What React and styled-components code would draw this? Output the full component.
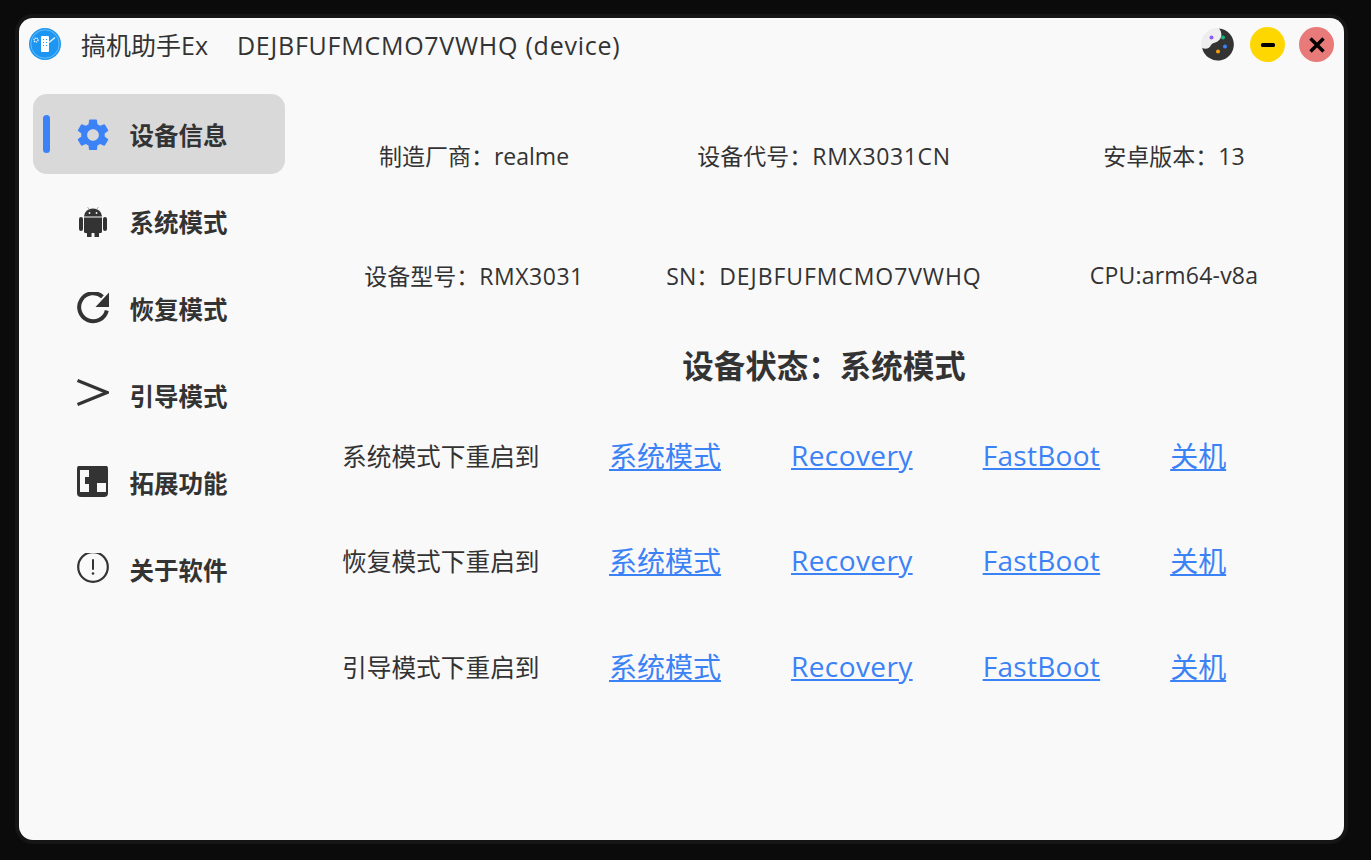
import React from 'react'
import styled, { createGlobalStyle } from 'styled-components'

const Global = createGlobalStyle`
  html, body {
    margin: 0;
    height: 100%;
    background: #0b0b0b;
  }
  body {
    font-family: "Open Sans", "Noto Sans CJK SC", sans-serif;
    color: #333;
    overflow: hidden;
  }
`
const Window = styled.div`
  width: 1325px;
  height: 822px;
  margin: 18px 0 0 19px;
  background: #f9f9f9;
  border-radius: 14px;
  box-shadow: 0 0 0 4px #151515;
  overflow: hidden;
`
const TitleBar = styled.header`
  height: 56px;
  display: flex;
  align-items: center;
  padding: 0 10px;
`
const LogoSlot = styled.div`
  display: flex;
  margin-bottom: 4px;
`
const Title = styled.div`
  font-size: 25px;
  margin: 0 0 4px 20px;
  white-space: nowrap;
`
const Device = styled.span`
  margin-left: 29px;
  letter-spacing: 0.75px;
`
const Spacer = styled.div`
  flex: 1;
`
const Controls = styled.div`
  display: flex;
  align-items: center;
  gap: 14px;
  margin-bottom: 3px;
`
const ThemeSlot = styled.div`
  display: flex;
  margin-right: 2px;
`
const Round = styled.div`
  width: 35px;
  height: 35px;
  border-radius: 50%;
  background: ${({ $bg }) => $bg};
  display: flex;
  align-items: center;
  justify-content: center;
`
const Body = styled.div`
  display: flex;
  padding-top: 20px;
`
const Sidebar = styled.nav`
  width: 280px;
  flex-shrink: 0;
  padding-left: 14px;
  box-sizing: border-box;
  display: flex;
  flex-direction: column;
  gap: 7px;
`
const Item = styled.div`
  position: relative;
  width: 252px;
  height: 80px;
  border-radius: 14px;
  background: ${({ $active }) => ($active ? '#d9d9d9' : 'transparent')};
  display: flex;
  align-items: center;
  padding-left: 44px;
  box-sizing: border-box;
  gap: 21px;
`
const Marker = styled.span`
  position: absolute;
  left: 10px;
  top: 21px;
  width: 7px;
  height: 38px;
  border-radius: 4px;
  background: #3b82f6;
`
const ItemText = styled.span`
  font-size: 24.5px;
  font-weight: 700;
  color: #333;
  margin-left: -0.5px;
`
const Main = styled.main`
  width: 1050px;
  flex-shrink: 0;
  padding-top: 1px;
`
const InfoGrid = styled.div`
  display: grid;
  grid-template-columns: repeat(3, 350px);
  grid-auto-rows: 120px;
  align-items: center;
  justify-items: center;
`
const Info = styled.div`
  font-size: 23px;
  white-space: nowrap;
`
const InfoValue = styled.span`
  letter-spacing: ${({ $spacing }) => $spacing}px;
`
const Heading = styled.h2`
  margin: 1px 0 6px;
  height: 60px;
  line-height: 60px;
  font-size: 31.5px;
  font-weight: 700;
  text-align: center;
`
const RebootRow = styled.div`
  height: 105.5px;
  display: flex;
  align-items: center;
  gap: 70px;
  padding-left: 43px;
`
const RowLabel = styled.span`
  width: 197px;
  font-size: 24.7px;
  white-space: nowrap;
`
const RebootLink = styled.a`
  font-size: 28px;
  color: #3b82f6;
  text-decoration: underline;
  white-space: nowrap;
  cursor: pointer;
  letter-spacing: ${({ $spacing }) => $spacing}px;
`

const Logo = () => (
  <svg width="32" height="32" viewBox="0 0 32 32">
    <circle cx="16" cy="16" r="16" fill="#1c96f2" />
    <circle cx="16" cy="16" r="14.2" fill="none" stroke="#8ccdf9" strokeWidth="0.7" />
    <rect x="12" y="8" width="8" height="16" rx="1" fill="#fff" />
    <circle cx="7" cy="12" r="2" fill="none" stroke="#fff" strokeWidth="1.2" strokeDasharray="1.2 0.6" />
    <path d="M20 14.500l6-5" stroke="#d8eefd" strokeWidth="1.6" />
    <g fill="#1c96f2">
      <rect x="14" y="11" width="1" height="1" />
      <rect x="17" y="11" width="1" height="1" />
      <rect x="14" y="14" width="1" height="1" />
      <rect x="17" y="14" width="1" height="1" />
      <rect x="14" y="17" width="1" height="1" />
      <rect x="17" y="17" width="1" height="1" />
    </g>
  </svg>
)

const ThemeIcon = () => (
  <svg width="33" height="33" viewBox="0 0 33 33">
    <circle cx="16.500" cy="16.500" r="16.500" fill="#eeeeee" />
    <path d="M18 0.600A16 16 0 1 1 1.200 20C5 22 9 20 10 17C12 14 18 15 20 9C21 6 20 3 18 0.600z" fill="#333" />
    <circle cx="10.500" cy="9.500" r="2" fill="#8b5cf6" />
    <circle cx="22" cy="9.500" r="2" fill="#10b981" />
    <circle cx="24" cy="18.500" r="2" fill="#3b82f6" />
    <circle cx="17" cy="23.500" r="2" fill="#f59e0b" />
  </svg>
)

const Gear = () => (
  <svg width="32" height="32" viewBox="2.200 1.400 19.600 20" preserveAspectRatio="none" fill="#3b82f6">
    <path d="M19.140 12.940c.04-.3.060-.61.060-.94 0-.32-.02-.64-.07-.94l2.030-1.580a.49.49 0 0 0 .12-.61l-1.920-3.320a.488.488 0 0 0-.59-.22l-2.390.96c-.5-.38-1.030-.7-1.620-.94l-.36-2.540a.484.484 0 0 0-.48-.41h-3.840c-.24 0-.43.17-.47.41l-.36 2.540c-.59.24-1.130.57-1.620.94l-2.390-.96c-.22-.08-.47 0-.59.22L2.740 8.870c-.12.21-.08.47.12.61l2.030 1.580c-.05.3-.09.63-.09.94s.02.64.07.94l-2.030 1.580a.49.49 0 0 0-.12.61l1.920 3.320c.12.22.37.29.59.22l2.390-.96c.5.38 1.030.7 1.620.94l.36 2.540c.05.24.24.41.48.41h3.840c.24 0 .44-.17.47-.41l.36-2.540c.59-.24 1.130-.56 1.620-.94l2.390.96c.22.08.47 0 .59-.22l1.920-3.320c.12-.22.07-.47-.12-.61l-2.010-1.580zM12 15.600c-1.980 0-3.600-1.620-3.600-3.600s1.620-3.600 3.600-3.600 3.600 1.620 3.600 3.600-1.620 3.600-3.600 3.600z" />
  </svg>
)

const Android = () => (
  <svg width="32" height="32" viewBox="0 -2 32 32" fill="#333">
    <path d="M7 9.500a9 8 0 0 1 18 0z" />
    <path d="M10.500 0l2.500 3.500M21.500 0l-2.500 3.500" stroke="#777" strokeWidth="0.6" />
    <circle cx="12.500" cy="6" r="0.9" fill="#f9f9f9" />
    <circle cx="19.500" cy="6" r="0.9" fill="#f9f9f9" />
    <path d="M7 10.500h18v14a1.500 1.500 0 0 1-1.500 1.500H8.500A1.500 1.500 0 0 1 7 24.500z" />
    <rect x="2" y="10" width="4" height="14" rx="2" />
    <rect x="26" y="10" width="4" height="14" rx="2" />
    <rect x="10" y="24" width="4.500" height="8" rx="2.200" />
    <rect x="17.500" y="24" width="4.500" height="8" rx="2.200" />
  </svg>
)

const Refresh = () => (
  <svg width="32" height="32" viewBox="0 1 32 32">
    <path d="M29.800 19.500A14 14 0 1 1 25.500 5.800" fill="none" stroke="#333" strokeWidth="4" />
    <path d="M32 1.500v14.500H18.500z" fill="#333" />
  </svg>
)

const Chevron = () => (
  <svg width="32" height="32" viewBox="0 0 32 32">
    <path d="M0.500 1.500L30 13.500 0.500 25.500" fill="none" stroke="#333" strokeWidth="3.200" />
  </svg>
)

const Extension = () => (
  <svg width="32" height="32" viewBox="0 1 32 32">
    <rect x="0" y="0" width="31" height="32" rx="4" fill="#333" />
    <path d="M3 5h9v7H8v7h4v8H3z" fill="#f9f9f9" />
    <rect x="20" y="18" width="9" height="9" fill="#f9f9f9" />
  </svg>
)

const About = () => (
  <svg width="32" height="32" viewBox="0 2 32 32">
    <circle cx="16" cy="16" r="14.800" fill="none" stroke="#333" strokeWidth="2.200" />
    <rect x="15" y="8" width="2" height="11" rx="1" fill="#333" />
    <circle cx="16" cy="22.500" r="1.300" fill="#333" />
  </svg>
)

const navItems = [
  { icon: <Gear />, label: '设备信息', active: true },
  { icon: <Android />, label: '系统模式' },
  { icon: <Refresh />, label: '恢复模式' },
  { icon: <Chevron />, label: '引导模式' },
  { icon: <Extension />, label: '拓展功能' },
  { icon: <About />, label: '关于软件' },
]

const infos = [
  { label: '制造厂商：', value: 'realme', spacing: 0 },
  { label: '设备代号：', value: 'RMX3031CN', spacing: 0.65 },
  { label: '安卓版本：', value: '13', spacing: 0 },
  { label: '设备型号：', value: 'RMX3031', spacing: 0.55 },
  { label: 'SN：', value: 'DEJBFUFMCMO7VWHQ', spacing: 0.92 },
  { label: '', value: 'CPU:arm64-v8a', spacing: 0.2 },
]

const rows = ['系统模式下重启到', '恢复模式下重启到', '引导模式下重启到']
const targets = [
  { label: '系统模式', spacing: 0 },
  { label: 'Recovery', spacing: 0.4 },
  { label: 'FastBoot', spacing: 0.3 },
  { label: '关机', spacing: 0 },
]

export default () => (
  <>
    <Global />
    <Window>
      <TitleBar>
        <LogoSlot><Logo /></LogoSlot>
        <Title>
          搞机助手Ex
          <Device>DEJBFUFMCMO7VWHQ (device)</Device>
        </Title>
        <Spacer />
        <Controls>
          <ThemeSlot><ThemeIcon /></ThemeSlot>
          <Round $bg="#ffd700">
            <svg width="16" height="6" viewBox="0 0 16 6"><rect x="1" y="1" width="14" height="4" rx="1.500" fill="#000" /></svg>
          </Round>
          <Round $bg="#e87a7a">
            <svg width="18" height="18" viewBox="0 0 18 18"><path d="M2.500 2.500l13 13M15.500 2.500l-13 13" stroke="#000" strokeWidth="3.400" /></svg>
          </Round>
        </Controls>
      </TitleBar>
      <Body>
        <Sidebar>
          {navItems.map(item => (
            <Item key={item.label} $active={item.active}>
              {item.active && <Marker />}
              {item.icon}
              <ItemText>{item.label}</ItemText>
            </Item>
          ))}
        </Sidebar>
        <Main>
          <InfoGrid>
            {infos.map(info => (
              <Info key={info.value}>
                {info.label}
                <InfoValue $spacing={info.spacing}>{info.value}</InfoValue>
              </Info>
            ))}
          </InfoGrid>
          <Heading>设备状态：系统模式</Heading>
          {rows.map(row => (
            <RebootRow key={row}>
              <RowLabel>{row}</RowLabel>
              {targets.map(target => (
                <RebootLink key={target.label} $spacing={target.spacing}>{target.label}</RebootLink>
              ))}
            </RebootRow>
          ))}
        </Main>
      </Body>
    </Window>
  </>
)
